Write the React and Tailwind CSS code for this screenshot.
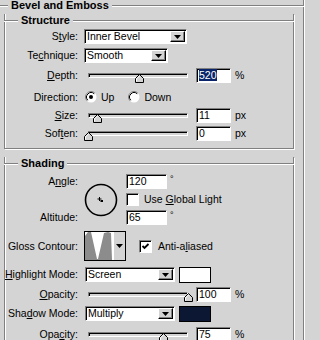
import React from "react";

const sunken =
  "border border-t-[#808080] border-l-[#808080] border-b-white border-r-white shadow-[inset_1px_1px_0_#000]";
const raised =
  "border border-t-white border-l-white border-b-black border-r-black shadow-[inset_-1px_-1px_0_#808080]";

function Tri() {
  return (
    <svg width="7" height="4" viewBox="0 0 7 4">
      <path d="M0 0h7L3.5 4z" fill="#000" />
    </svg>
  );
}

function Mnemonic({ text, u }) {
  if (u == null) return text;
  return (
    <>
      {text.slice(0, u)}
      <span className="underline underline-offset-[1px]">{text[u]}</span>
      {text.slice(u + 1)}
    </>
  );
}

function Label({ text, u }) {
  return (
    <div className="w-[73px] shrink-0 whitespace-nowrap text-right">
      <Mnemonic text={text} u={u} />:
    </div>
  );
}

function Group({ title, className = "", children }) {
  return (
    <div
      className={`border-x border-b border-[#808080] shadow-[inset_1px_0_0_#fff,1px_1px_0_#fff] ${className}`}
    >
      <div className="-mx-px -mt-[6px] flex h-[12px] items-center">
        <div className="h-px w-[14px] bg-[#808080] shadow-[0_1px_0_#fff]" />
        <div className="whitespace-nowrap px-[3px] text-[11px] font-bold leading-none">{title}</div>
        <div className="h-px flex-1 bg-[#808080] shadow-[0_1px_0_#fff]" />
      </div>
      {children}
    </div>
  );
}

function Dropdown({ value, className = "" }) {
  return (
    <div className={`flex h-[15px] items-stretch bg-white ${sunken} ${className}`}>
      <span className="flex-1 pl-[2px] leading-[13px]">{value}</span>
      <span className={`my-px mr-px flex w-[15px] items-center justify-center bg-[#d4d4d4] ${raised}`}>
        <Tri />
      </span>
    </div>
  );
}

function Num({ value, selected, className = "w-[35px]" }) {
  return (
    <div className={`h-[15px] bg-white pl-[2px] leading-[13px] ${sunken} ${className}`}>
      {selected ? <span className="bg-[#0a246a] text-white">{value}</span> : value}
    </div>
  );
}

function Slider({ pos, className = "" }) {
  return (
    <div className={`relative h-[5px] w-[100px] bg-[#d4d4d4] ${sunken} ${className}`}>
      <svg className="absolute top-0" style={{ left: pos - 5 }} width="9" height="9" viewBox="0 0 9 9">
        <path d="M0.5 8.5V4.5L4.5 0.5L8.5 4.5V8.5Z" fill="#d4d4d4" stroke="#000" />
        <path d="M1.5 7.5V4.9L4.5 1.9" fill="none" stroke="#fff" />
      </svg>
    </div>
  );
}

function Radio({ checked }) {
  return (
    <svg width="12" height="12" viewBox="0 0 12 12">
      <circle cx="6" cy="6" r="5.5" fill="#fff" />
      <path d="M2.11 9.89A5.5 5.5 0 0 1 9.89 2.11" fill="none" stroke="#808080" />
      <path d="M2.82 9.18A4.5 4.5 0 0 1 9.18 2.82" fill="none" stroke="#000" />
      {checked && <circle cx="6" cy="6" r="2" fill="#000" />}
    </svg>
  );
}

function Check({ checked, className = "" }) {
  return (
    <div className={`h-[13px] w-[13px] shrink-0 bg-white ${sunken} ${className}`}>
      {checked && (
        <svg width="11" height="11" viewBox="0 0 11 11">
          <path d="M2.5 5L4.5 7L8.5 3" fill="none" stroke="#000" strokeWidth="1.8" />
        </svg>
      )}
    </div>
  );
}

function SliderRow({ label, u, pos, value, unit, selected, className = "" }) {
  return (
    <div className={`flex h-[15px] items-center ${className}`}>
      <Label text={label} u={u} />
      <Slider pos={pos} className="ml-[10px]" />
      <Num value={value} selected={selected} className="ml-[8px] w-[35px]" />
      <span className="ml-[4px]">{unit}</span>
    </div>
  );
}

export default function App() {
  return (
    <div className="h-[340px] w-[320px] overflow-hidden bg-[#d4d4d4] pt-[5px] font-['Liberation_Sans',Arial,sans-serif] text-[10.5px] leading-none text-black">
      <Group title="Bevel and Emboss" className="-ml-[6px] w-[310px] pb-[20px]">
        <Group title="Structure" className="mx-[9px] mt-[9px] pb-[7px]">
          <div className="mt-[3px] flex h-[15px] items-center">
            <Label text="Style" u={1} />
            <Dropdown value="Inner Bevel" className="ml-[6px] w-[103px]" />
          </div>
          <div className="mt-[4px] flex h-[15px] items-center">
            <Label text="Technique" u={2} />
            <Dropdown value="Smooth" className="ml-[6px] w-[84px]" />
          </div>
          <SliderRow label="Depth" u={0} pos={51} value="520" unit="%" selected className="mt-[5px]" />
          <div className="mt-[7px] flex h-[14px] items-center">
            <Label text="Direction" />
            <span className="ml-[7px] flex"><Radio checked /></span>
            <span className="ml-[4px]">Up</span>
            <span className="ml-[14px] flex"><Radio /></span>
            <span className="ml-[4px]">Down</span>
          </div>
          <SliderRow label="Size" u={0} pos={9} value="11" unit="px" className="mt-[4px]" />
          <SliderRow label="Soften" u={3} pos={0} value="0" unit="px" className="mt-[3px]" />
        </Group>

        <Group title="Shading" className="mx-[9px] mt-[14px] pb-[20px]">
          <div className="mt-[5px] grid grid-cols-[73px_34px_1fr] grid-rows-[15px_13px_15px] gap-x-[6px] gap-y-[4px]">
            <div className="col-start-1 row-start-1 flex items-center justify-end">
              <Mnemonic text="Angle" u={1} />:
            </div>
            <svg className="col-start-2 row-span-3 row-start-1 self-center" width="34" height="34" viewBox="0 0 34 34">
              <circle cx="17" cy="17" r="15.5" fill="none" stroke="#000" strokeWidth="1.6" />
              <path d="M15.5 14v4M13.5 16h4" stroke="#000" />
              <rect x="16.5" y="17" width="2.5" height="2" fill="#000" />
            </svg>
            <div className="col-start-3 row-start-1 ml-[2px] flex items-start">
              <Num value="120" className="w-[41px]" />
              <span className="ml-[3px] mt-[1px] text-[9px]">°</span>
            </div>
            <div className="col-start-3 row-start-2 ml-[2px] flex items-center">
              <Check />
              <span className="ml-[5px]">
                Use <Mnemonic text="Global" u={0} /> Light
              </span>
            </div>
            <div className="col-start-1 row-start-3 flex items-center justify-end">Altitude:</div>
            <div className="col-start-3 row-start-3 ml-[2px] flex items-start">
              <Num value="65" className="w-[41px]" />
              <span className="ml-[3px] mt-[1px] text-[9px]">°</span>
            </div>
          </div>

          <div className="mt-[6px] flex h-[30px] items-center">
            <Label text="Gloss Contour" />
            <div className="ml-[6px] flex h-[30px] w-[42px] border border-black bg-[#d4d4d4]">
              <svg width="29" height="28" viewBox="0 0 29 28" className="bg-white">
                <path d="M0 28V4L3 0L6 0L12 27L13 27L19 1L23 0L26 1L27 28Z" fill="#8c8c8c" />
              </svg>
              <div className="flex flex-1 items-center justify-center">
                <Tri />
              </div>
            </div>
            <Check checked className="ml-[13px]" />
            <span className="ml-[6px]">
              <Mnemonic text="Anti-aliased" u={6} />
            </span>
          </div>

          <div className="mt-[6px] flex h-[15px] items-center">
            <Label text="Highlight Mode" u={0} />
            <Dropdown value="Screen" className="ml-[7px] w-[90px]" />
            <div className="ml-[4px] h-[16px] w-[32px] border border-black bg-white" />
          </div>
          <SliderRow label="Opacity" u={0} pos={100} value="100" unit="%" className="mt-[5px]" />
          <div className="mt-[4px] flex h-[15px] items-center">
            <Label text="Shadow Mode" u={3} />
            <Dropdown value="Multiply" className="ml-[7px] w-[90px]" />
            <div className="ml-[4px] h-[16px] w-[32px] border border-black bg-[#0b1733]" />
          </div>
          <SliderRow label="Opacity" u={3} pos={75} value="75" unit="%" className="mt-[6px]" />
        </Group>
      </Group>
    </div>
  );
}
